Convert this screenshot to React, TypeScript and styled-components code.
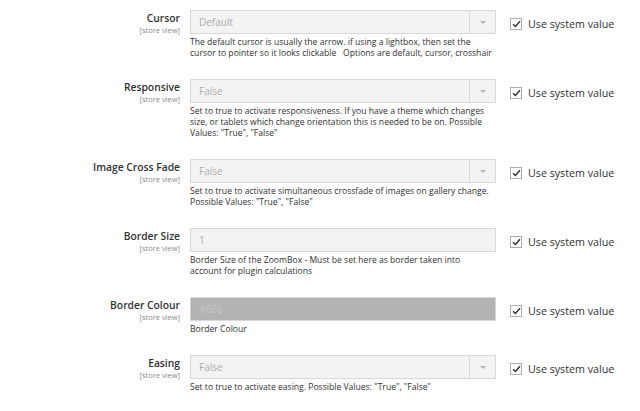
import React from 'react'
import styled, { createGlobalStyle } from 'styled-components'

const GlobalStyle = createGlobalStyle`
  html, body {
    margin: 0;
    padding: 0;
    background: #ffffff;
  }
  body {
    font-family: "Open Sans", "Liberation Sans", sans-serif;
    color: #303030;
  }
`

const Page = styled.div`
  padding-top: 10px;
  width: 640px;
  overflow: hidden;
`

const FieldRow = styled.div`
  display: grid;
  grid-template-columns: 180px 306px 1fr;
  column-gap: 10px;
  padding-bottom: 20px;
`

const LabelCell = styled.div`
  display: flex;
  flex-direction: column;
  align-items: flex-end;
  padding-top: 2px;
`

const Label = styled.span`
  font-size: 10.3px;
  font-weight: 600;
  line-height: 13px;
  color: #303030;
  white-space: nowrap;
`

const Scope = styled.span`
  font-size: 7.5px;
  line-height: 10px;
  color: #8a8a8a;
  white-space: nowrap;
`

const ValueCell = styled.div`
  display: flex;
  flex-direction: column;
`

const Control = styled.div<{ $shade?: string }>`
  box-sizing: border-box;
  height: 24px;
  display: flex;
  align-items: stretch;
  border: 1px solid #d8d8d8;
  background: ${({ $shade }) => $shade || '#f3f3f3'};
`

const ControlValue = styled.span<{ $light?: boolean }>`
  flex: 1;
  display: flex;
  align-items: center;
  padding-left: 8px;
  font-size: 10px;
  color: ${({ $light }) => ($light ? '#c8c8c8' : '#adadad')};
`

const Arrow = styled.span`
  width: 25px;
  border-left: 1px solid #d8d8d8;
  display: flex;
  align-items: center;
  justify-content: center;

  &::after {
    content: '';
    border-left: 3px solid transparent;
    border-right: 3px solid transparent;
    border-top: 3px solid #b5b5b5;
  }
`

const Note = styled.div`
  margin-top: 3px;
  font-size: 8.6px;
  line-height: 11px;
  color: #303030;
  white-space: nowrap;
`

const UseDefault = styled.label`
  display: flex;
  align-items: center;
  gap: 6px;
  height: 24px;
  padding-left: 4px;
  padding-top: 2px;
  font-size: 10.7px;
  color: #303030;
  white-space: nowrap;
`

const CheckBox = styled.span`
  box-sizing: border-box;
  width: 12px;
  height: 12px;
  border: 1px solid #adadad;
  background: #fff;
  display: flex;
  align-items: center;
  justify-content: center;
`

type Field = {
  label: string
  value: string
  note: React.ReactNode
  select?: boolean
  shade?: string
}

const fields: Field[] = [
  {
    label: 'Cursor',
    value: 'Default',
    select: true,
    note: (
      <>
        The default cursor is usually the arrow. if using a lightbox, then set the
        <br />
        cursor to pointer so it looks clickable &nbsp; Options are default, cursor, crosshair
      </>
    ),
  },
  {
    label: 'Responsive',
    value: 'False',
    select: true,
    note: (
      <>
        Set to true to activate responsiveness. If you have a theme which changes
        <br />
        size, or tablets which change orientation this is needed to be on. Possible
        <br />
        Values: "True", "False"
      </>
    ),
  },
  {
    label: 'Image Cross Fade',
    value: 'False',
    select: true,
    note: (
      <>
        Set to true to activate simultaneous crossfade of images on gallery change.
        <br />
        Possible Values: "True", "False"
      </>
    ),
  },
  {
    label: 'Border Size',
    value: '1',
    note: (
      <>
        Border Size of the ZoomBox - Must be set here as border taken into
        <br />
        account for plugin calculations
      </>
    ),
  },
  {
    label: 'Border Colour',
    value: '#666',
    shade: '#b3b3b3',
    note: 'Border Colour',
  },
  {
    label: 'Easing',
    value: 'False',
    select: true,
    note: 'Set to true to activate easing. Possible Values: "True", "False"',
  },
]

const Tick = () => (
  <svg width="9" height="8" viewBox="0 0 9 8">
    <path d="M1 4.2 L3.4 6.5 L8 1.2" fill="none" stroke="#303030" strokeWidth="1.4" />
  </svg>
)

export default function App() {
  return (
    <>
      <GlobalStyle />
      <Page>
        {fields.map((f) => (
          <FieldRow key={f.label}>
            <LabelCell>
              <Label>{f.label}</Label>
              <Scope>[store view]</Scope>
            </LabelCell>
            <ValueCell>
              <Control $shade={f.shade}>
                <ControlValue $light={!!f.shade}>{f.value}</ControlValue>
                {f.select && <Arrow />}
              </Control>
              <Note>{f.note}</Note>
            </ValueCell>
            <UseDefault>
              <CheckBox>
                <Tick />
              </CheckBox>
              Use system value
            </UseDefault>
          </FieldRow>
        ))}
      </Page>
    </>
  )
}
